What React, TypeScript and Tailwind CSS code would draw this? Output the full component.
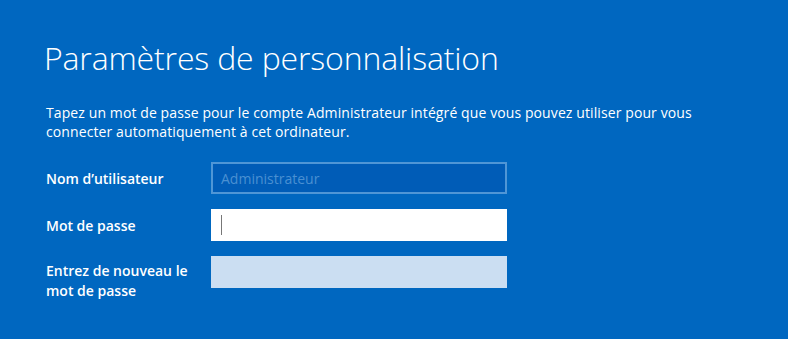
export default function App() {
  return (
    <div className="h-[339px] w-[788px] overflow-hidden bg-[#0067c0] font-['Open_Sans',sans-serif] text-white">
      <div className="pl-[44px] pt-[36px]">
        <h1 className="text-[32px] font-light leading-[44px] tracking-[-0.15px]">Paramètres de personnalisation</h1>
        <p className="mt-[23px] pl-[2px] text-[14px] leading-[19px] tracking-[0.1px]">
          Tapez un mot de passe pour le compte Administrateur intégré que vous pouvez utiliser pour vous
          <br />
          connecter automatiquement à cet ordinateur.
        </p>
        <div className="mt-[21px] grid grid-cols-[165px_296px] gap-y-[15px] pl-[2px]">
          <div className="flex items-center text-[14px] font-semibold">Nom d’utilisateur</div>
          <div className="flex h-[32px] items-center border-2 border-[#4f96d6] bg-[#005cb7] px-[8px] text-[14px] text-[#4a90d2]">
            Administrateur
          </div>
          <div className="flex items-center text-[14px] font-semibold">Mot de passe</div>
          <div className="flex h-[32px] items-center bg-white px-[10px]">
            <div className="h-[20px] w-px bg-[#777]" />
          </div>
          <div className="pt-[5px] text-[14px] font-semibold leading-[20px]">
            Entrez de nouveau le
            <br />
            mot de passe
          </div>
          <div className="h-[32px] bg-[#cbdef2]" />
        </div>
      </div>
    </div>
  );
}
